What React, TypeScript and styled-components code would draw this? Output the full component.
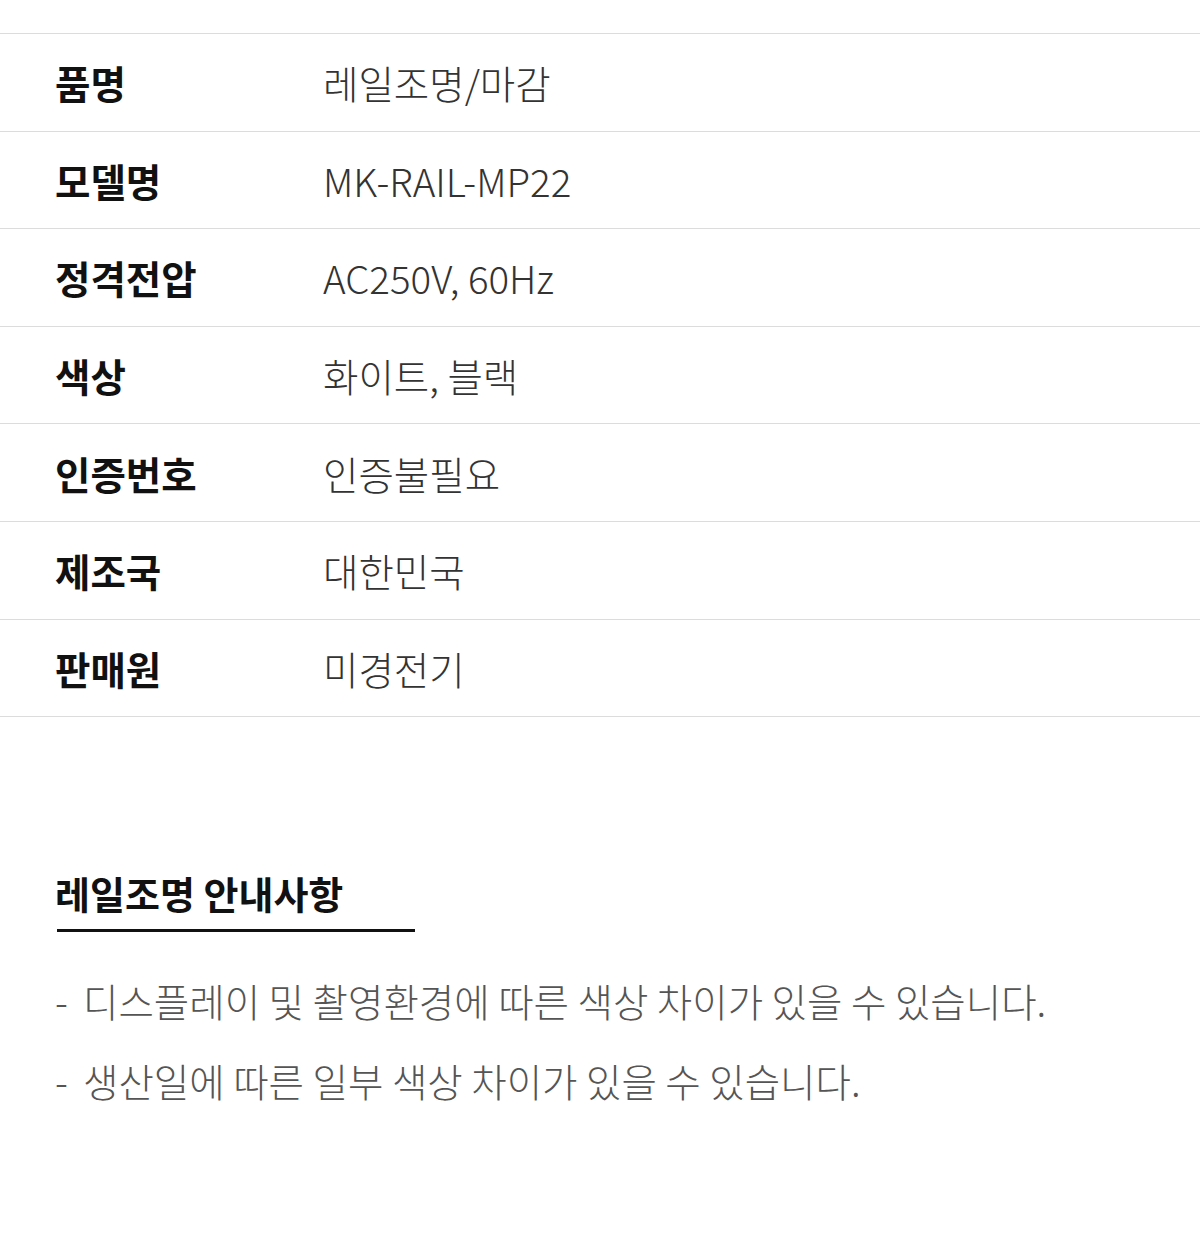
import React from 'react';
import styled, { createGlobalStyle } from 'styled-components';

const GlobalStyle = createGlobalStyle`
  html, body {
    margin: 0;
    padding: 0;
    background: #fff;
  }
  body {
    font-family: 'Noto Sans CJK KR', 'Noto Sans', sans-serif;
  }
`;

const Page = styled.div`
  width: 1200px;
  padding-top: 33px;
  padding-bottom: 140px;
`;

const SpecTable = styled.div`
  border-top: 1px solid #dcdcdc;
`;

const SpecRow = styled.div`
  display: grid;
  grid-template-columns: 268px 1fr;
  align-items: center;
  height: 96.6px;
  padding-left: 55px;
  border-bottom: 1px solid #dcdcdc;
`;

const SpecLabel = styled.div`
  font-size: 38.5px;
  font-weight: 700;
  color: #111;
`;

const SpecValue = styled.div`
  font-size: 38.5px;
  font-weight: 300;
  color: #333;
`;

const Notice = styled.section`
  padding: 150px 0 0 55px;
`;

const NoticeTitle = styled.h2`
  margin: 0;
  font-size: 38px;
  font-weight: 700;
  color: #111;
  line-height: 52px;
`;

const TitleRule = styled.div`
  width: 358px;
  height: 3px;
  margin: 10px 0 0 2px;
  background: #111;
`;

const NoticeList = styled.ul`
  list-style: none;
  margin: 42px 0 0;
  padding: 0;
  display: flex;
  flex-direction: column;
  gap: 28px;
`;

const NoticeItem = styled.li`
  display: flex;
  gap: 16px;
  font-size: 38.5px;
  font-weight: 300;
  line-height: 52px;
  color: #555;
`;

const Dash = styled.span`
  width: 12px;
`;

const specs = [
  ['품명', '레일조명/마감'],
  ['모델명', 'MK-RAIL-MP22'],
  ['정격전압', 'AC250V, 60Hz'],
  ['색상', '화이트, 블랙'],
  ['인증번호', '인증불필요'],
  ['제조국', '대한민국'],
  ['판매원', '미경전기'],
];

const notices = [
  '디스플레이 및 촬영환경에 따른 색상 차이가 있을 수 있습니다.',
  '생산일에 따른 일부 색상 차이가 있을 수 있습니다.',
];

export default function App() {
  return (
    <Page>
      <GlobalStyle />
      <SpecTable>
        {specs.map(([label, value]) => (
          <SpecRow key={label}>
            <SpecLabel>{label}</SpecLabel>
            <SpecValue>{value}</SpecValue>
          </SpecRow>
        ))}
      </SpecTable>
      <Notice>
        <NoticeTitle>레일조명 안내사항</NoticeTitle>
        <TitleRule />
        <NoticeList>
          {notices.map((text) => (
            <NoticeItem key={text}>
              <Dash>-</Dash>
              <span>{text}</span>
            </NoticeItem>
          ))}
        </NoticeList>
      </Notice>
    </Page>
  );
}
